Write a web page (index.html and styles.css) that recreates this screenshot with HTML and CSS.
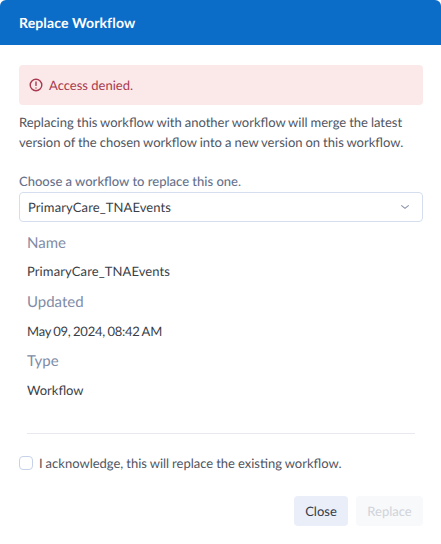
FILE: index.html
```html
<!DOCTYPE html>
<html lang="en">
<head>
<meta charset="utf-8">
<title>Replace Workflow</title>
<link rel="stylesheet" href="styles.css">
</head>
<body>
<div class="modal">
  <header class="modal-header">Replace Workflow</header>
  <div class="modal-body">
    <div class="alert">
      <svg class="alert-icon" viewBox="0 0 16 16" fill="none" stroke="currentColor" stroke-width="1.4" stroke-linecap="round"><circle cx="8" cy="8" r="5.8"/><path d="M8 5v3.4"/><path d="M8 10.9v.1"/></svg>
      <span>Access denied.</span>
    </div>
    <p class="intro">Replacing this workflow with another workflow will merge the latest version of the chosen workflow into a new version on this workflow.</p>
    <div class="choose">Choose a workflow to replace this one.</div>
    <div class="select">
      <span class="wide">PrimaryCare_TNAEvents</span>
      <svg class="chevron" viewBox="0 0 8 4" fill="none" stroke="currentColor" stroke-width="1.1" stroke-linecap="round" stroke-linejoin="round"><path d="M.6.6L4 3.4 7.4.6"/></svg>
    </div>
    <dl class="details">
      <dt>Name</dt><dd class="wide">PrimaryCare_TNAEvents</dd>
      <dt>Updated</dt><dd class="date">May 09, 2024, 08:42 AM</dd>
      <dt class="type">Type</dt><dd class="type-value">Workflow</dd>
    </dl>
    <hr class="rule">
    <label class="ack"><span class="box"></span><span>I acknowledge, this will replace the existing workflow.</span></label>
    <div class="actions">
      <button class="btn btn-close">Close</button>
      <button class="btn btn-replace">Replace</button>
    </div>
  </div>
</div>
</body>
</html>
```
FILE: styles.css
```css
* { box-sizing: border-box; }
html, body { margin: 0; padding: 0; background: #fff; }
body { width: 441px; height: 544px; overflow: hidden; font-family: Lato, sans-serif; font-size: 13px; color: #3a3e47; text-rendering: geometricPrecision; }
.modal { width: 441px; height: 544px; background: #fff; border-radius: 6px 6px 0 0; overflow: hidden; }
.modal-header { height: 45px; background: #0b6dc8; color: #fff; font-weight: 700; font-size: 14px; letter-spacing: .13px; line-height: 46px; padding-left: 19px; }
.modal-body { padding: 20px 18px 0 19px; }
.alert { height: 40px; background: #fbe9ea; border-radius: 4px; color: #a8394e; display: flex; align-items: center; gap: 5px; padding-left: 9px; }
.alert-icon { width: 16px; height: 16px; flex: none; }
.intro { margin: 7px 0 0; line-height: 20px; color: #50555f; word-spacing: -.35px; }
.choose { margin-top: 19px; line-height: 20px; font-weight: 500; color: #66718c; }
.select { margin-top: 1px; height: 30px; border: 1px solid #d5deee; border-radius: 4px; display: flex; align-items: center; justify-content: space-between; padding: 0 13px 0 8px; }
.wide { letter-spacing: .1px; }
.chevron { width: 8px; height: 4px; color: #8b95ab; }
.details { margin: 0; padding: 0 9px 0 8px; }
.details dt { margin-top: 11px; font-size: 15px; line-height: 20px; color: #808ba6; }
.details dd { margin: 8px 0 0; line-height: 20px; }
.details .date { margin-top: 9px; letter-spacing: -.25px; word-spacing: -.6px; }
.details .type { margin-top: 10px; }
.details .type-value { margin-top: 9px; }
.rule { margin: 33px 8px 0; border: 0; border-top: 1px solid #e7e9ee; }
.ack { margin-top: 19px; display: flex; align-items: center; gap: 6px; line-height: 20px; color: #50555f; word-spacing: -.35px; }
.box { width: 14px; height: 14px; border: 1px solid #c5d2ea; border-radius: 4px; background: #fff; flex: none; }
.actions { margin-top: 23px; display: flex; justify-content: flex-end; gap: 8px; }
.btn { height: 30px; border: 0; border-radius: 4px; font: 13px Lato, sans-serif; padding: 0; text-rendering: geometricPrecision; }
.btn-close { width: 54px; background: #e9eef9; color: #333a4a; }
.btn-replace { width: 67px; background: #f8f9fb; color: #d0d3d9; }
```
